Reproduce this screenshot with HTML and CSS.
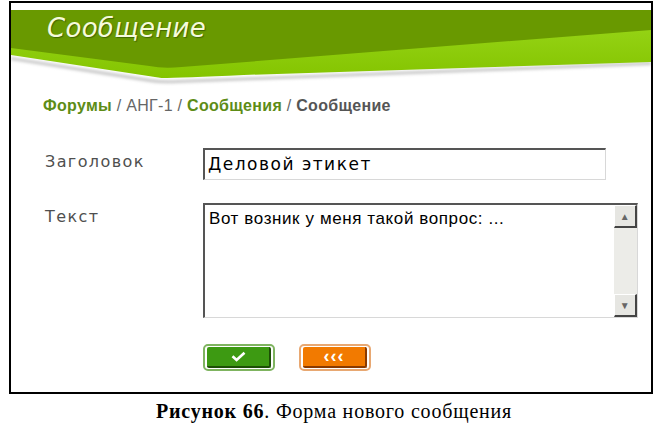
FILE: index.html
```html
<!DOCTYPE html>
<html lang="ru">
<head>
    <meta charset="UTF-8">
    <title>Сообщение</title>
    <link rel="stylesheet" href="styles.css">
</head>
<body>

    <div class="figure">
        <div class="panel">

            <!-- Green banner with the page title -->
            <div class="banner">
                <svg class="banner-bg" viewBox="0 0 638 76" preserveAspectRatio="none">
                    <defs>
                        <linearGradient id="lime" x1="0" y1="0" x2="0" y2="1">
                            <stop offset="0" stop-color="#9bd81c"/>
                            <stop offset="1" stop-color="#84c400"/>
                        </linearGradient>
                        <filter id="soft" x="-5%" y="-50%" width="110%" height="200%">
                            <feGaussianBlur stdDeviation="1.6"/>
                        </filter>
                    </defs>
                    <path d="M0 47 L140 69 Q152 71 166 70 L638 52 L638 55 L166 73 Q150 74 138 72 L0 50 Z" fill="#c8c8c8" filter="url(#soft)"/>
                    <path d="M0 0 H638 V52 L232 65 Q170 68 150 68 L0 45 Z" fill="url(#lime)"/>
                    <path d="M0 0 H638 V20 L170 57 Q152 59 138 56 L0 38 Z" fill="#699900"/>
                </svg>
                <h1 class="banner-title">Сообщение</h1>
            </div>

            <div class="crumbs">
                <a href="#" class="crumb-link">Форумы</a>
                <span class="crumb-sep">/ АНГ-1 /</span>
                <a href="#" class="crumb-link">Сообщения</a>
                <span class="crumb-sep">/</span>
                <span class="crumb-current">Сообщение</span>
            </div>

            <form class="form">
                <label class="form-label">Заголовок</label>
                <div class="field field-input">Деловой этикет</div>

                <label class="form-label">Текст</label>
                <div class="field field-area">
                    <div class="area-text">Вот возник у меня такой вопрос: ...</div>
                    <div class="scrollbar">
                        <span class="scroll-btn">&#9650;</span>
                        <span class="scroll-btn">&#9660;</span>
                    </div>
                </div>

                <div class="form-buttons">
                    <button type="button" class="btn btn-ok">
                        <span class="btn-face">
                            <svg width="15" height="11" viewBox="0 0 15 11">
                                <path d="M1.5 5.2 L5.6 9 L13.5 1.8" fill="none" stroke="#fff" stroke-width="2.6"/>
                            </svg>
                        </span>
                    </button>
                    <button type="button" class="btn btn-back">
                        <span class="btn-face">&#8249;&#8249;&#8249;</span>
                    </button>
                </div>
            </form>
        </div>

        <p class="caption"><b>Рисунок 66</b>. Форма нового сообщения</p>
    </div>

</body>
</html>
```

FILE: styles.css
```css
/* Reset */
* {
    margin: 0;
    padding: 0;
    box-sizing: border-box;
}

body {
    background-color: #fff;
    font-family: "Liberation Sans", Arial, sans-serif;
    color: #333;
}

.figure {
    width: 668px;
    padding-top: 1px;
}

/* Framed screen */
.panel {
    margin-left: 9px;
    width: 644px;
    height: 393px;
    border: 2px solid #000;
    padding-top: 7px;
}

/* Banner */
.banner {
    position: relative;
    height: 76px;
}

.banner-bg {
    display: block;
    width: 100%;
    height: 100%;
}

.banner-title {
    position: absolute;
    top: 3px;
    left: 36px;
    font-family: "DejaVu Sans", sans-serif;
    font-style: oblique;
    font-weight: normal;
    font-size: 26px;
    letter-spacing: 0.3px;
    color: #f6fbdc;
    text-shadow: 1px 1px 1px rgba(40, 70, 0, 0.6);
}

/* Breadcrumbs */
.crumbs {
    padding: 11px 0 0 32px;
    height: 62px;
    font-size: 16px;
    color: #666;
    letter-spacing: 0.3px;
}

.crumb-link {
    color: #5d8c16;
    font-weight: bold;
    text-decoration: none;
}

.crumb-current {
    color: #555;
    font-weight: bold;
}

/* Form */
.form {
    display: grid;
    grid-template-columns: 158px 435px;
    row-gap: 23px;
    padding-left: 34px;
}

.form-label {
    padding-top: 4px;
    font-family: "DejaVu Sans", sans-serif;
    font-size: 16px;
    letter-spacing: 1.4px;
    color: #4f4f4f;
}

.field {
    font-size: 17px;
    letter-spacing: 0.6px;
    color: #000;
    background-color: #fff;
    border-top: 2px solid #555;
    border-left: 2px solid #555;
    border-right: 1px solid #d8d8d8;
    border-bottom: 1px solid #d8d8d8;
}

.field-input {
    width: 403px;
    height: 32px;
    padding: 4px 0 0 3px;
    font-family: "DejaVu Sans", sans-serif;
    font-size: 17px;
    letter-spacing: 1.5px;
}

.field-area {
    height: 115px;
    display: flex;
}

.area-text {
    flex: 1;
    padding: 4px 0 0 4px;
}

/* Fake scroll bar */
.scrollbar {
    width: 23px;
    display: flex;
    flex-direction: column;
    justify-content: space-between;
    background-color: #ecece8;
}

.scroll-btn {
    height: 23px;
    display: flex;
    align-items: center;
    justify-content: center;
    font-size: 10px;
    color: #666;
    background-color: #e6e6e2;
    border-right: 2px solid #444;
    border-bottom: 2px solid #444;
    border-top: 1px solid #fff;
    border-left: 1px solid #fff;
}

/* Buttons */
.form-buttons {
    grid-column: 2;
    display: flex;
    gap: 24px;
    padding-top: 3px;
}

.btn {
    width: 72px;
    height: 27px;
    padding: 1px 2px;
    border-radius: 5px;
    background-color: #fff;
    cursor: pointer;
}

.btn-face {
    display: flex;
    align-items: center;
    justify-content: center;
    height: 100%;
    border-radius: 2px;
    color: #fff;
    font-size: 18px;
    font-weight: bold;
    letter-spacing: 1px;
}

.btn-ok {
    border: 2px solid #7fb460;
}

.btn-ok .btn-face {
    background-color: #3d9a12;
    border-right: 2px solid #1d4f05;
    border-bottom: 2px solid #1d4f05;
}

.btn-back {
    border: 2px solid #e8a872;
}

.btn-back .btn-face {
    background-color: #f27a00;
    border-right: 2px solid #8a3a00;
    border-bottom: 2px solid #8a3a00;
}

/* Caption under the figure */
.caption {
    padding-top: 6px;
    text-align: center;
    font-family: "Liberation Serif", "Times New Roman", serif;
    font-size: 20px;
    letter-spacing: 0.8px;
    color: #000;
}
```
